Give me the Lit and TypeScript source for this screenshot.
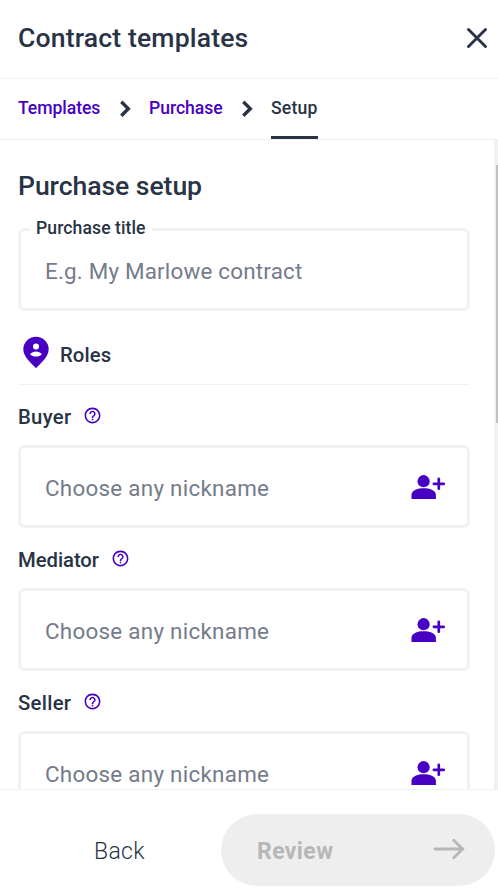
import { LitElement, html, css } from "lit";
import { customElement, property } from "lit/decorators.js";

@customElement("role-field")
class RoleField extends LitElement {
  @property() label = "";

  static styles = css`
    :host { display: block; height: 143px; }
    .label { display: flex; align-items: flex-start; height: 60px; }
    .name { font-size: 20.3px; font-weight: 500; line-height: 24px; padding-top: 20px; letter-spacing: 0.3px; }
    :host([label="Mediator"]) .name { letter-spacing: -0.05px; }
    .help { display: block; flex: none; margin: 21px 0 0 12px; fill: #4700c3; }
    .box { box-sizing: border-box; height: 83px; border: 3px solid #f1f1f1; border-radius: 7px; display: flex; align-items: center; justify-content: space-between; padding: 0 22px 0 24px; }
    .hint { font-size: 22.4px; font-weight: 400; line-height: 28px; color: #747b8a; letter-spacing: 0.27px; padding-top: 2px; white-space: nowrap; }
    .add { display: block; flex: none; fill: #4700c3; }
  `;

  render() {
    return html`
      <div class="label">
        <span class="name">${this.label}</span>
        <svg class="help" width="19" height="19" viewBox="0 0 24 24">
          <path d="M11 18h2v-2h-2v2zm1-16C6.48 2 2 6.48 2 12s4.48 10 10 10 10-4.48 10-10S17.52 2 12 2zm0 18c-4.41 0-8-3.59-8-8s3.59-8 8-8 8 3.59 8 8-3.59 8-8 8zm0-14c-2.21 0-4 1.79-4 4h2c0-1.1.9-2 2-2s2 .9 2 2c0 2-3 1.75-3 5h2c0-2.25 3-2.5 3-5 0-2.21-1.79-4-4-4z"/>
        </svg>
      </div>
      <div class="box">
        <span class="hint">Choose any nickname</span>
        <svg class="add" width="35" height="26" viewBox="0 0 35 26">
          <circle cx="13.6" cy="7.2" r="6.1"/>
          <path d="M1.500 25v-4.200c0-4.600 6.600-6.500 12.200-6.500s12.200 1.900 12.200 6.500V25z"/>
          <path d="M28.800 4.900v9.800M23.900 9.800h9.800" stroke="#4700c3" stroke-width="2.700" stroke-linecap="round"/>
        </svg>
      </div>
    `;
  }
}

@customElement("app-root")
class AppRoot extends LitElement {
  static styles = css`
    :host { display: flex; flex-direction: column; width: 498px; height: 891px; overflow: hidden; background: #fff; color: #283346; font-family: Roboto, "Liberation Sans", sans-serif; }
    .header { flex: none; box-sizing: border-box; height: 79px; border-bottom: 1px solid #f1f1f1; display: flex; justify-content: space-between; align-items: center; padding: 0 10px 2px 18px; }
    .title { font-size: 26.6px; font-weight: 500; line-height: 32px; letter-spacing: 0.14px; }
    .close { display: block; }
    .crumbs { flex: none; box-sizing: border-box; height: 61px; border-bottom: 1px solid #f1f1f1; display: flex; padding-left: 18px; font-size: 17.6px; font-weight: 500; line-height: 22px; letter-spacing: -0.06px; }
    .crumb { box-sizing: border-box; height: 60px; padding-top: 18px; color: #4700c3; white-space: nowrap; }
    .c1 { width: 83px; }
    .c2 { width: 74px; }
    .c3 { width: 47px; color: #283346; border-bottom: 3px solid #283346; letter-spacing: 0.2px; }
    .sep { display: block; margin: 21px 17px 0 18px; }
    .body { flex: 1; min-height: 0; display: flex; overflow: hidden; }
    .content { flex: 1; padding: 0 24px 0 18px; }
    .track { width: 4px; background: #f1f1f1; display: flex; justify-content: flex-end; }
    .thumb { width: 2px; height: 258px; margin-top: 25px; background: #c1c1c1; }
    .heading { margin: 0; height: 79px; box-sizing: border-box; padding-top: 30px; font-size: 26.6px; font-weight: 500; line-height: 32px; letter-spacing: -0.07px; }
    .field { position: relative; margin-top: 9px; box-sizing: border-box; height: 83px; border: 3px solid #f1f1f1; border-radius: 7px; padding: 26px 24px 0; }
    .legend { position: absolute; left: 9px; top: -14px; width: 116px; padding-left: 6px; background: #fff; font-size: 17.6px; font-weight: 500; line-height: 22px; letter-spacing: 0.08px; white-space: nowrap; }
    .hint { font-size: 22.4px; font-weight: 400; line-height: 28px; color: #747b8a; letter-spacing: 0.2px; white-space: nowrap; }
    .roles { box-sizing: border-box; height: 74px; border-bottom: 1px solid #f1f1f1; display: flex; padding: 24px 0 0 4px; font-size: 20.3px; font-weight: 500; line-height: 24px; letter-spacing: 0.1px; }
    .pin { display: block; margin: 1px 10px 0 0; }
    .roles span { padding-top: 8px; }
    .footer { flex: none; box-sizing: border-box; height: 102px; border-top: 1px solid #f1f1f1; display: flex; padding: 24px 3px 0 0; font-size: 23px; }
    .back { width: 221px; box-sizing: border-box; padding: 24px 0 0 94px; font-weight: 350; line-height: 28px; letter-spacing: 0.3px; }
    .review { flex: 1; box-sizing: border-box; height: 72px; border-radius: 36px; background: #eee; color: #b7b7b7; font-weight: 700; line-height: 28px; letter-spacing: 0.4px; display: flex; justify-content: space-between; align-items: center; padding: 0 30px 0 36px; }
    .review span { padding-top: 3px; }
    .arrow { display: block; margin-top: -2px; }
  `;

  private chevron() {
    return html`<svg class="sep" width="13" height="18" viewBox="0 0 13 18">
      <path d="M2.300 1.800 9.300 8.800 2.300 15.800" fill="none" stroke="#283346" stroke-width="3.400"/>
    </svg>`;
  }

  render() {
    return html`
      <div class="header">
        <span class="title">Contract templates</span>
        <svg class="close" width="22" height="22" viewBox="0 0 22 22">
          <path d="M2.500 2.500 19.500 19.500M19.500 2.500 2.500 19.500" stroke="#283346" stroke-width="2.900" stroke-linecap="round"/>
        </svg>
      </div>
      <div class="crumbs">
        <div class="crumb c1">Templates</div>
        ${this.chevron()}
        <div class="crumb c2">Purchase</div>
        ${this.chevron()}
        <div class="crumb c3">Setup</div>
      </div>
      <div class="body">
        <div class="content">
          <h2 class="heading">Purchase setup</h2>
          <div class="field">
            <span class="legend">Purchase title</span>
            <div class="hint">E.g. My Marlowe contract</div>
          </div>
          <div class="roles">
            <svg class="pin" width="28" height="34" viewBox="0 0 28 34">
              <path d="M14 32.300C10.500 28 1.300 21.600 1.300 13.300a12.700 12.600 0 0 1 25.400 0C26.700 21.600 17.500 28 14 32.300z" fill="#4700c3"/>
              <circle cx="14" cy="10.500" r="3" fill="#fff"/>
              <path d="M8.100 18.200c1.300-1.900 3.900-2.700 5.900-2.700s4.600.8 5.900 2.700c-1.300 1.500-3.700 2.300-5.900 2.300s-4.600-.8-5.900-2.300z" fill="#fff"/>
            </svg>
            <span>Roles</span>
          </div>
          <role-field label="Buyer"></role-field>
          <role-field label="Mediator"></role-field>
          <role-field label="Seller"></role-field>
        </div>
        <div class="track"><div class="thumb"></div></div>
      </div>
      <div class="footer">
        <div class="back">Back</div>
        <div class="review">
          <span>Review</span>
          <svg class="arrow" width="33" height="22" viewBox="0 0 33 22">
            <path d="M3 11H31M21.700 2.200 30.600 11 21.700 19.800" fill="none" stroke="#b7b7b7" stroke-width="2.800" stroke-linecap="round" stroke-linejoin="round"/>
          </svg>
        </div>
      </div>
    `;
  }
}
